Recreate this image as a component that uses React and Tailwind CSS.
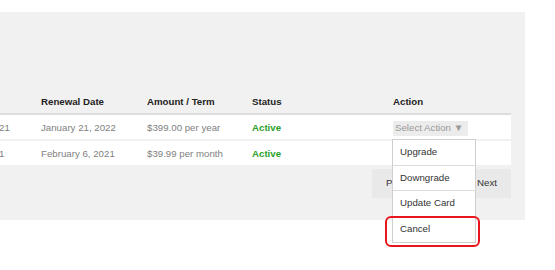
import { useState } from "react";

const rows = [
  { start: "January 21, 2021", renewal: "January 21, 2022", amount: "$399.00 per year", status: "Active" },
  { start: "January 6, 2021", renewal: "February 6, 2021", amount: "$39.99 per month", status: "Active" },
];

const actions = ["Upgrade", "Downgrade", "Update Card", "Cancel"];

const cols = "grid grid-cols-[106px_106px_105px_141px_118px]";

export default function App() {
  const [open] = useState(true);

  return (
    <div className="relative w-[555px] h-[270px] bg-white pt-[12px] font-['Liberation_Sans',Arial,sans-serif] text-[9.7px]">
      <div className="w-[525px] h-[208px] bg-[#f1f1f1] pt-[79px] overflow-hidden">
        <div className="-ml-[65px] w-[576px]">
          {/* Header */}
          <div className={`${cols} h-[24px] items-center border-b-2 border-[#dddddd] font-bold text-[#222]`}>
            <div>Start Date</div>
            <div>Renewal Date</div>
            <div>Amount / Term</div>
            <div>Status</div>
            <div>Action</div>
          </div>

          {/* Rows */}
          {rows.map((r, i) => (
            <div key={i} className={`${cols} h-[24px] items-center pt-[2px] bg-white mb-[2px] text-[#808080]`}>
              <div>{r.start}</div>
              <div>{r.renewal}</div>
              <div>{r.amount}</div>
              <div className="font-bold text-[#2ca02c]">{r.status}</div>
              <div>
                {i === 0 && (
                  <span className="inline-flex items-center h-[15px] pl-[2px] pr-[5px] bg-[#ececec] text-[#9a9a9a]">
                    Select Action ▼
                  </span>
                )}
              </div>
            </div>
          ))}

          {/* Pagination */}
          <div className="flex justify-end mt-[4px]">
            <div className="flex items-center justify-between w-[139px] h-[29px] px-[14px] bg-[#e9e9e9] text-[#333]">
              <span>Previous</span>
              <span>Next</span>
            </div>
          </div>
        </div>
      </div>

      {/* Dropdown menu */}
      {open && (
        <div className="absolute left-[392px] top-[139px] w-[84px] bg-white border border-[#cfcfcf] text-[#333]">
          {actions.map((a, i) => (
            <div
              key={a}
              className={`h-[25.6px] flex items-center pl-[7px] ${i < actions.length - 1 ? "border-b border-[#dcdcdc]" : ""}`}
            >
              {a}
            </div>
          ))}
        </div>
      )}

      {/* Highlight */}
      <div className="absolute left-[385px] top-[216px] w-[95px] h-[31px] border-2 border-[#e8161b] rounded-[6px]"></div>
    </div>
  );
}
